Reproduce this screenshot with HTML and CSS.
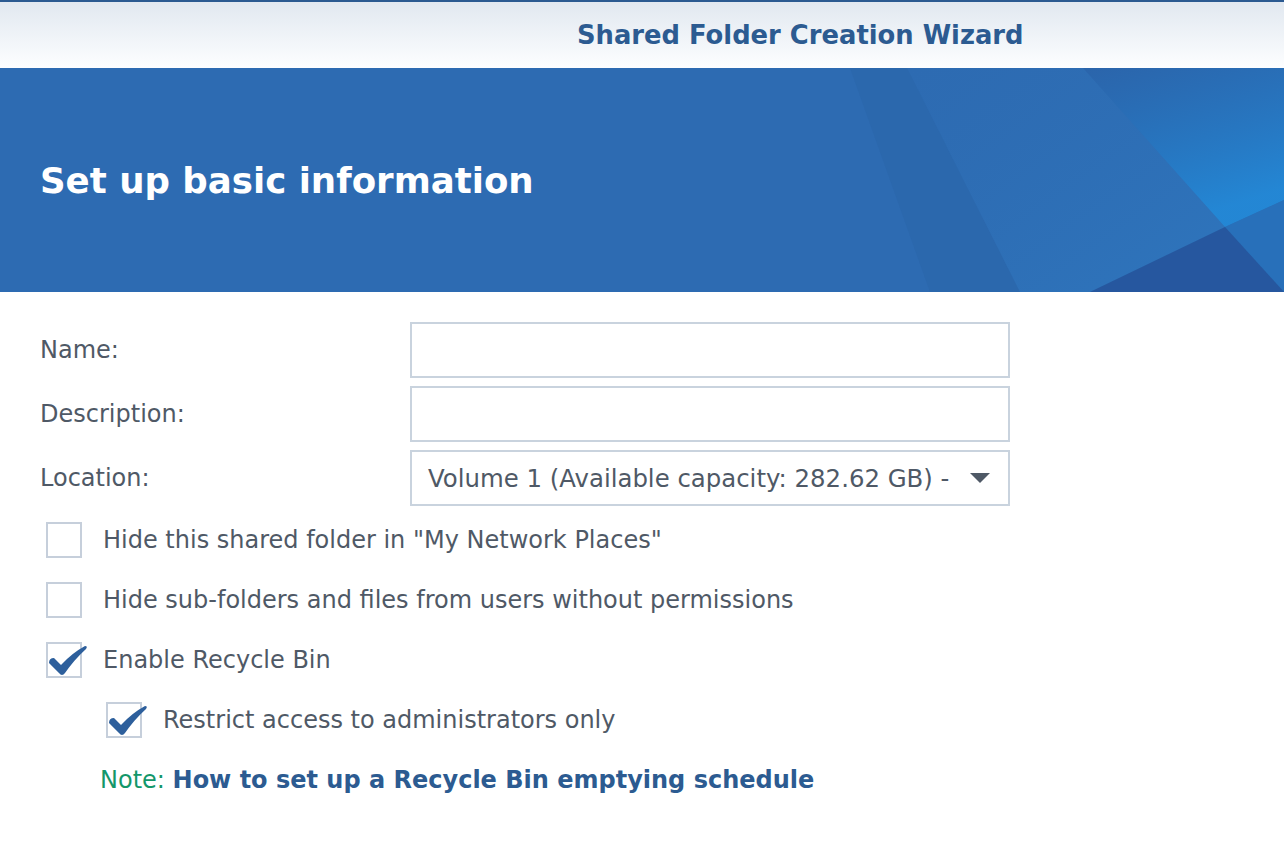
FILE: index.html
```html
<!DOCTYPE html>
<html>
<head>
<meta charset="utf-8">
<link rel="stylesheet" href="styles.css">
</head>
<body>
<div class="window">
  <header class="titlebar">
    <h1 class="wizard-title">Shared Folder Creation Wizard</h1>
  </header>
  <section class="banner">
    <svg class="banner-art" viewBox="0 0 1284 224" preserveAspectRatio="none" aria-hidden="true">
      <defs>
        <linearGradient id="g1" x1="0" y1="0" x2="1" y2="1">
          <stop offset="0" stop-color="#2f72b8" stop-opacity="0"/>
          <stop offset="1" stop-color="#2f7cc4" stop-opacity="0.6"/>
        </linearGradient>
        <linearGradient id="g2" x1="0" y1="0" x2="0.4" y2="1">
          <stop offset="0" stop-color="#2a62a8" stop-opacity="0.7"/>
          <stop offset="1" stop-color="#2388d6" stop-opacity="0.95"/>
        </linearGradient>
      </defs>
      <polygon points="850,0 907,0 1020,224 930,224" fill="#285f9f" opacity="0.25"/>
      <polygon points="907,0 1083,0 1225,159 1090,224 1020,224" fill="url(#g1)"/>
      <polygon points="1083,0 1284,0 1284,132 1225,159" fill="url(#g2)"/>
      <polygon points="1225,159 1284,132 1284,224" fill="#2772bb" opacity="0.8"/>
      <polygon points="1090,224 1225,159 1284,224" fill="#24529a" opacity="0.8"/>
    </svg>
    <h2 class="banner-title">Set up basic information</h2>
  </section>
  <main class="content">
    <div class="form-grid">
      <label class="field-label">Name:</label>
      <div class="text-input"></div>
      <label class="field-label">Description:</label>
      <div class="text-input"></div>
      <label class="field-label">Location:</label>
      <div class="text-input select">
        <span class="select-value">Volume 1 (Available capacity: 282.62 GB) -</span>
        <span class="select-arrow"></span>
      </div>
    </div>
    <div class="options">
      <div class="option">
        <span class="checkbox"></span>
        <span class="option-text">Hide this shared folder in "My Network Places"</span>
      </div>
      <div class="option">
        <span class="checkbox"></span>
        <span class="option-text">Hide sub-folders and files from users without permissions</span>
      </div>
      <div class="option">
        <span class="checkbox checked">
          <svg class="tick" viewBox="0 0 48 42" aria-hidden="true"><path d="M3 21 Q3 16 8 16 L15 23 Q26 11 39 4 Q42 4 40 7 Q28 18 19 31 Q16 35 13 31 Z" fill="#2d5f9c"/></svg>
        </span>
        <span class="option-text">Enable Recycle Bin</span>
      </div>
      <div class="option sub">
        <span class="checkbox checked">
          <svg class="tick" viewBox="0 0 48 42" aria-hidden="true"><path d="M3 21 Q3 16 8 16 L15 23 Q26 11 39 4 Q42 4 40 7 Q28 18 19 31 Q16 35 13 31 Z" fill="#2d5f9c"/></svg>
        </span>
        <span class="option-text">Restrict access to administrators only</span>
      </div>
      <p class="note"><span class="note-label">Note:</span> <a class="note-link">How to set up a Recycle Bin emptying schedule</a></p>
    </div>
  </main>
</div>
</body>
</html>
```

FILE: styles.css
```css
* { box-sizing: border-box; }
html, body { margin: 0; padding: 0; background: #fff; }
body {
  font-family: "DejaVu Sans", Verdana, sans-serif;
  color: #4f5966;
  width: 1284px;
  height: 864px;
  overflow: hidden;
}
.titlebar {
  height: 68px;
  border-top: 2px solid #2b5a91;
  background: linear-gradient(#e1e8f0, #fdfeff);
  display: flex;
  align-items: center;
  padding-left: 577px;
}
.wizard-title {
  margin: 0;
  font-size: 25.8px;
  font-weight: bold;
  color: #2c5b91;
}
.banner {
  position: relative;
  height: 224px;
  background: #2d6bb2;
  display: flex;
  align-items: center;
  padding-left: 40px;
  overflow: hidden;
}
.banner-art {
  position: absolute;
  left: 0; top: 0;
  width: 100%; height: 100%;
}
.banner-title {
  position: relative;
  margin: 0;
  font-size: 35.6px;
  font-weight: bold;
  color: #fff;
}
.content {
  padding: 30px 0 0 40px;
}
.form-grid {
  display: grid;
  grid-template-columns: 370px 600px;
  grid-auto-rows: 56px;
  row-gap: 8px;
  align-items: center;
}
.field-label { font-size: 24px; }
.text-input {
  height: 56px;
  border: 2px solid #c9d3de;
  background: #fff;
}
.select {
  display: flex;
  align-items: center;
  justify-content: space-between;
  padding: 0 18px 0 16px;
}
.select-value { font-size: 24.4px; }
.select-arrow {
  width: 0; height: 0;
  border-left: 10px solid transparent;
  border-right: 10px solid transparent;
  border-top: 10px solid #4f5966;
}
.options {
  margin-top: 4px;
  display: flex;
  flex-direction: column;
}
.option {
  height: 60px;
  display: flex;
  align-items: center;
  gap: 21px;
  padding-left: 6px;
}
.option.sub { padding-left: 66px; }
.option-text { font-size: 24px; }
.checkbox {
  position: relative;
  width: 36px; height: 36px;
  border: 2px solid #c6cfdb;
  background: #fff;
  flex: none;
}
.tick {
  position: absolute;
  left: -2px; top: -2px;
  width: 48px; height: 42px;
}
.note {
  margin: 16px 0 0 60px;
  font-size: 24px;
}
.note-label { color: #13976a; }
.note-link { color: #2c5b91; font-weight: bold; }
```
